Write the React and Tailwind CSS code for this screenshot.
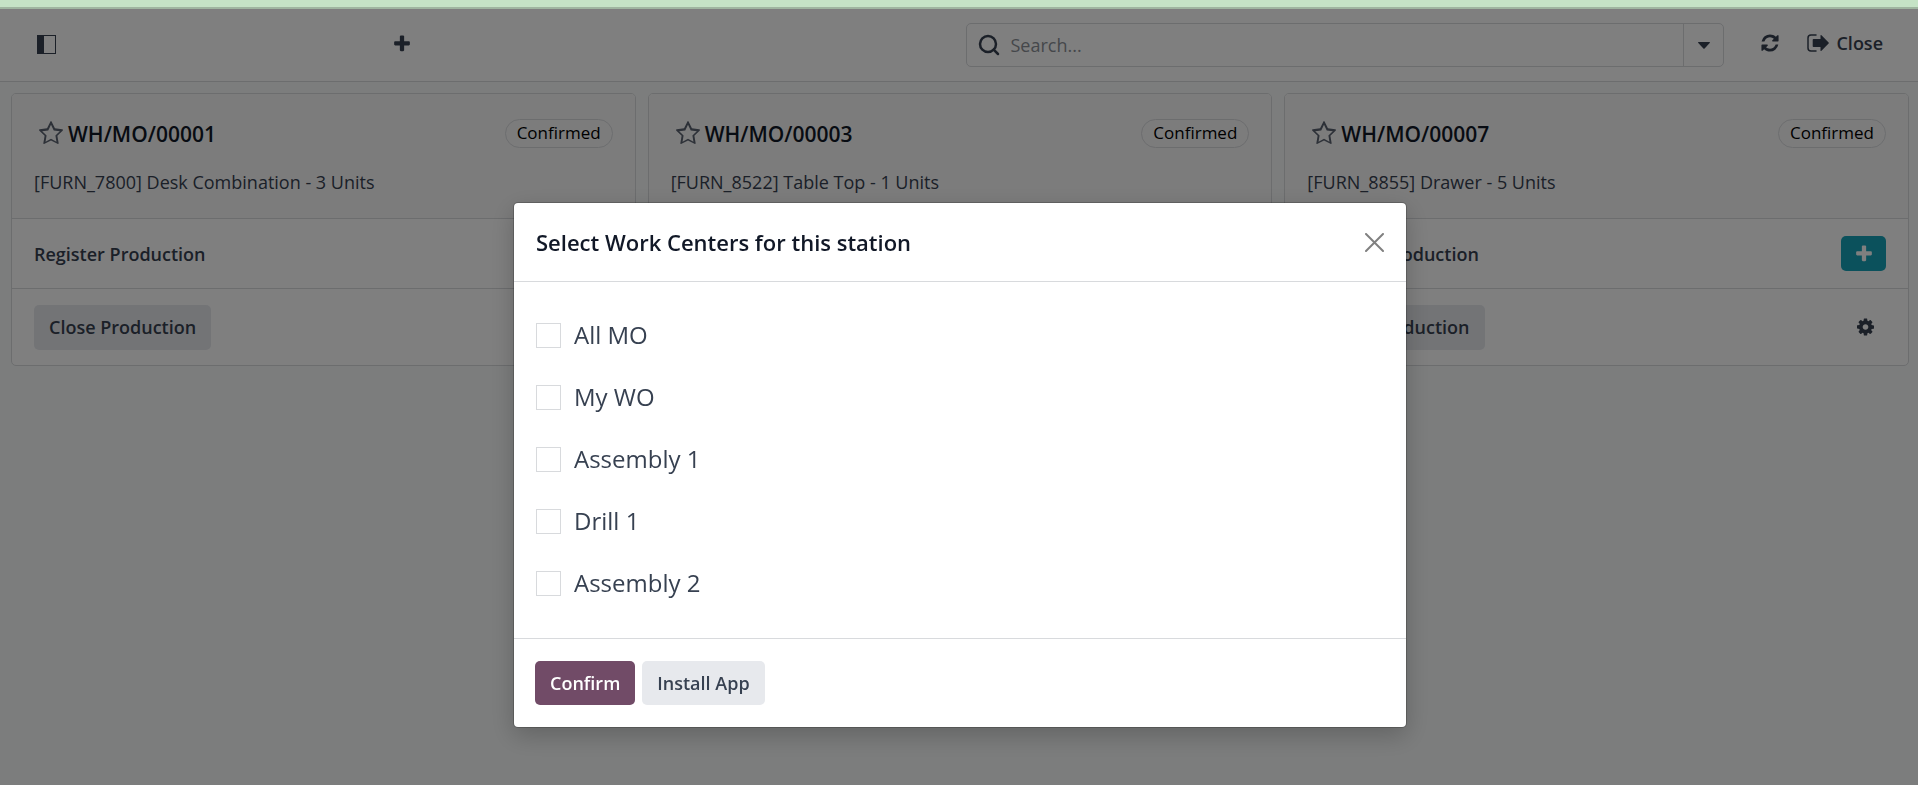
import { useState } from "react";
import { Search } from "lucide-react";

const orders = [
  { id: 1, name: "WH/MO/00001", product: "[FURN_7800] Desk Combination - 3 Units" },
  { id: 2, name: "WH/MO/00003", product: "[FURN_8522] Table Top - 1 Units" },
  { id: 3, name: "WH/MO/00007", product: "[FURN_8855] Drawer - 5 Units" },
];

const workCenters = ["All MO", "My WO", "Assembly 1", "Drill 1", "Assembly 2"];

function StarIcon({ className }) {
  return (
    <svg className={className} viewBox="0 0 1664 1792" fill="currentColor" aria-hidden="true">
      <path d="M1137 1004l306-297-422-62-189-382-189 382-422 62 306 297-73 421 378-199 377 199zM1664 615q0 22-26 48l-363 354 86 500q1 7 1 20 0 50-41 50-19 0-40-12l-449-236-449 236q-22 12-40 12-21 0-31.500-14.500t-10.500-35.500q0-6 2-20l86-500-364-354q-25-27-25-48 0-37 56-46l502-73 225-455q19-41 49-41t49 41l225 455 502 73q56 9 56 46z" />
    </svg>
  );
}

function PlusIcon({ className }) {
  return (
    <svg className={className} viewBox="0 0 1408 1792" fill="currentColor" aria-hidden="true">
      <path d="M1408 736v192q0 40-28 68t-68 28h-416v416q0 40-28 68t-68 28h-192q-40 0-68-28t-28-68v-416h-416q-40 0-68-28t-28-68v-192q0-40 28-68t68-28h416v-416q0-40 28-68t68-28h192q40 0 68 28t28 68v416h416q40 0 68 28t28 68z" />
    </svg>
  );
}

function GearIcon({ className }) {
  return (
    <svg className={className} viewBox="0 0 1536 1792" fill="currentColor" aria-hidden="true">
      <path d="M1024 896q0-106-75-181t-181-75-181 75-75 181 75 181 181 75 181-75 75-181zM1536 787v222q0 12-8 23t-20 13l-185 28q-19 54-39 91 35 50 107 138 10 12 10 25t-9 23q-27 37-99 108t-94 71q-12 0-26-9l-138-108q-44 23-91 38-16 136-29 186-7 28-36 28h-222q-14 0-24.500-8.500t-11.500-21.500l-28-184q-49-16-90-37l-141 107q-10 9-25 9-14 0-25-11-126-114-165-168-7-10-7-23 0-12 8-23 15-21 51-66.500t54-70.500q-27-50-41-99l-183-27q-13-2-21-12.500t-8-23.500v-222q0-12 8-23t19-13l186-28q14-46 39-92-40-57-107-138-10-12-10-24 0-10 9-23 26-36 98.500-107.500t94.500-71.500q13 0 26 10l138 107q44-23 91-38 16-136 29-186 7-28 36-28h222q14 0 24.500 8.500t11.500 21.500l28 184q49 16 90 37l142-107q9-9 24-9 13 0 25 10 129 119 165 170 7 8 7 22 0 12-8 23-15 21-51 66.500t-54 70.500q26 50 41 98l183 28q13 2 21 12.500t8 23.500z" />
    </svg>
  );
}

function RefreshIcon({ className }) {
  return (
    <svg className={className} viewBox="0 0 1536 1792" fill="currentColor" aria-hidden="true">
      <path d="M1511 1056q0 5-1 7-64 268-268 434.500t-478 166.500q-146 0-282.500-55t-243.500-157l-129 129q-19 19-45 19t-45-19-19-45v-448q0-26 19-45t45-19h448q26 0 45 19t19 45-19 45l-137 137q71 66 161 102t187 36q134 0 250-65t186-179q11-17 53-117 8-23 30-23h192q13 0 22.500 9.500t9.500 22.500zM1536 256v448q0 26-19 45t-45 19h-448q-26 0-45-19t-19-45 19-45l138-138q-148-137-349-137-134 0-250 65t-186 179q-11 17-53 117-8 23-30 23h-199q-13 0-22.500-9.500t-9.500-22.500v-7q65-268 270-434.500t480-166.500q146 0 284 55.500t245 156.500l130-129q19-19 45-19t45 19 19 45z" />
    </svg>
  );
}

function ExitIcon({ className }) {
  return (
    <svg className={className} viewBox="0 0 22 18" fill="none" aria-hidden="true">
      <path d="M9 1H4Q1 1 1 4v10q0 3 3 3h5" stroke="currentColor" strokeWidth="1.500" strokeLinecap="round" />
      <path d="M6.500 5h7V1.600q0-1.200 1-.4L21.600 8.400q.6.600 0 1.200l-7.100 7.200q-1 .8-1-.4V13h-7q-.8 0-.8-.8V5.800q0-.8.8-.8z" fill="currentColor" />
    </svg>
  );
}

function PanelIcon({ className }) {
  return (
    <svg className={className} viewBox="0 0 19 19" aria-hidden="true">
      <rect x="0.5" y="0.5" width="18" height="18" fill="none" stroke="currentColor" />
      <rect width="7" height="19" fill="currentColor" />
    </svg>
  );
}

function Navbar() {
  return (
    <header className="flex h-[73px] items-center border-b border-[#d8dadd] bg-white text-[#374151]">
      <div className="flex flex-1 items-center pb-[2px] pl-[37px]">
        <button type="button" aria-label="Toggle panel">
          <PanelIcon className="size-[19px]" />
        </button>
        <button type="button" aria-label="Add work center" className="ml-[338px]">
          <PlusIcon className="h-5 w-4" />
        </button>
      </div>
      <div className="flex flex-1 items-center pl-[11px] pr-[35px]">
        <div className="flex h-11 flex-1 rounded-[5px] border border-[#d8dadd]">
          <label className="flex flex-1 items-center gap-[10px] pl-[10px]">
            <Search className="size-6" strokeWidth={2.5} />
            <input
              type="search"
              aria-label="Search"
              placeholder="Search..."
              className="min-w-0 flex-1 bg-transparent text-lg outline-none placeholder:text-[#8b8f96]"
            />
          </label>
          <button
            type="button"
            aria-label="Search options"
            className="flex w-10 items-center justify-center border-l border-[#d8dadd]"
          >
            <svg className="h-[7px] w-3" viewBox="0 0 12 7" fill="currentColor" aria-hidden="true">
              <path d="M0.500 0h11q.8.300.2 1L6.600 6.500q-.6.500-1.200 0L.3 1Q-.3.300.5 0z" />
            </svg>
          </button>
        </div>
        <div className="flex items-center gap-7 pb-1 pl-[37px]">
          <button type="button" aria-label="Refresh">
            <RefreshIcon className="h-5 w-[18px]" />
          </button>
          <button type="button" className="flex items-center gap-[7px] text-lg font-semibold">
            <ExitIcon className="h-[18px] w-[22px]" />
            Close
          </button>
        </div>
      </div>
    </header>
  );
}

function OrderCard({ order }) {
  return (
    <article className="overflow-hidden rounded-[5px] border border-[#d8dadd] bg-white text-lg text-[#374151]">
      <div className="h-[125px] border-b border-[#d8dadd] bg-[#f9f9f9] px-[22px] pt-[25px]">
        <div className="flex items-center justify-between">
          <div className="flex items-center gap-[5px] pl-[5px]">
            <button type="button" aria-label="Set priority" className="text-[#5b6270]">
              <StarIcon className="h-[26px] w-6" />
            </button>
            <h2 className="text-[21px] leading-7 font-semibold text-[#111827]">{order.name}</h2>
          </div>
          <span className="flex h-[29px] items-center rounded-full border border-[#d8dadd] px-[11px] text-[17px] text-black">
            Confirmed
          </span>
        </div>
        <p className="mt-[20px]">{order.product}</p>
      </div>
      <div className="flex h-[70px] items-center justify-between border-b border-[#d8dadd] px-[22px] font-semibold">
        Register Production
        <button
          type="button"
          aria-label="Register production"
          className="flex h-[35px] w-[45px] items-center justify-center rounded-[5px] bg-[#17a2b8] text-white"
        >
          <PlusIcon className="h-5 w-4" />
        </button>
      </div>
      <div className="flex h-[76px] items-center justify-between px-[22px]">
        <button type="button" className="h-[45px] rounded-[5px] bg-[#e7e9ed] px-[15px] font-semibold">
          Close Production
        </button>
        <button type="button" aria-label="Settings" className="mr-3">
          <GearIcon className="h-5 w-[17px]" />
        </button>
      </div>
    </article>
  );
}

function WorkCenterDialog() {
  const [selected, setSelected] = useState([]);

  const toggle = (name) => {
    setSelected((prev) =>
      prev.includes(name) ? prev.filter((n) => n !== name) : [...prev, name]
    );
  };

  return (
    <div className="fixed inset-x-0 bottom-0 top-[9px] flex items-start justify-center bg-black/50 pl-[18px] pr-4 pt-[193px]">
      <div
        role="dialog"
        aria-modal="true"
        aria-labelledby="dialog-title"
        className="w-full max-w-[894px] rounded-[5px] border border-black/20 bg-white bg-clip-padding shadow-[0_8px_24px_rgba(0,0,0,0.2)]"
      >
        <div className="flex h-[79px] items-center justify-between border-b border-[#d8dadd] px-[22px]">
          <h1 id="dialog-title" className="text-[22px] font-semibold text-[#111827]">
            Select Work Centers for this station
          </h1>
          <button type="button" aria-label="Close dialog" className="text-[#808080]">
            <svg className="size-[19px]" viewBox="0 0 19 19" fill="none" stroke="currentColor" strokeWidth="2" strokeLinecap="round" aria-hidden="true">
              <path d="M1 1l17 17M18 1L1 18" />
            </svg>
          </button>
        </div>

        <div className="flex flex-col gap-[26px] px-[22px] pb-[37px] pt-[35px]">
          {workCenters.map((name) => (
            <label key={name} className="flex h-9 items-center gap-[13px] text-2xl text-[#374151]">
              <input
                type="checkbox"
                checked={selected.includes(name)}
                onChange={() => toggle(name)}
                className="size-[25px] appearance-none border border-[#d8dadd] bg-white checked:bg-[#714b67]"
              />
              {name}
            </label>
          ))}
        </div>

        <div className="flex gap-[7px] border-t border-[#d8dadd] px-[21px] py-[22px] text-lg font-semibold">
          <button type="button" className="h-11 rounded-[5px] bg-[#714b67] px-[15px] text-white">
            Confirm
          </button>
          <button type="button" className="h-11 rounded-[5px] bg-[#e7e9ed] px-[15px] text-[#374151]">
            Install App
          </button>
        </div>
      </div>
    </div>
  );
}

export default function App() {
  return (
    <div className="min-h-screen bg-[#f8fbfa] font-['Open_Sans',sans-serif]">
      <div className="h-[9px] border-b-2 border-[#9fb5a0] bg-[#c5e3c6]" />
      <Navbar />
      <main className="grid grid-cols-3 gap-3 pl-[11px] pr-[9px] pt-[11px]">
        {orders.map((order) => (
          <OrderCard key={order.id} order={order} />
        ))}
      </main>
      <WorkCenterDialog />
    </div>
  );
}
